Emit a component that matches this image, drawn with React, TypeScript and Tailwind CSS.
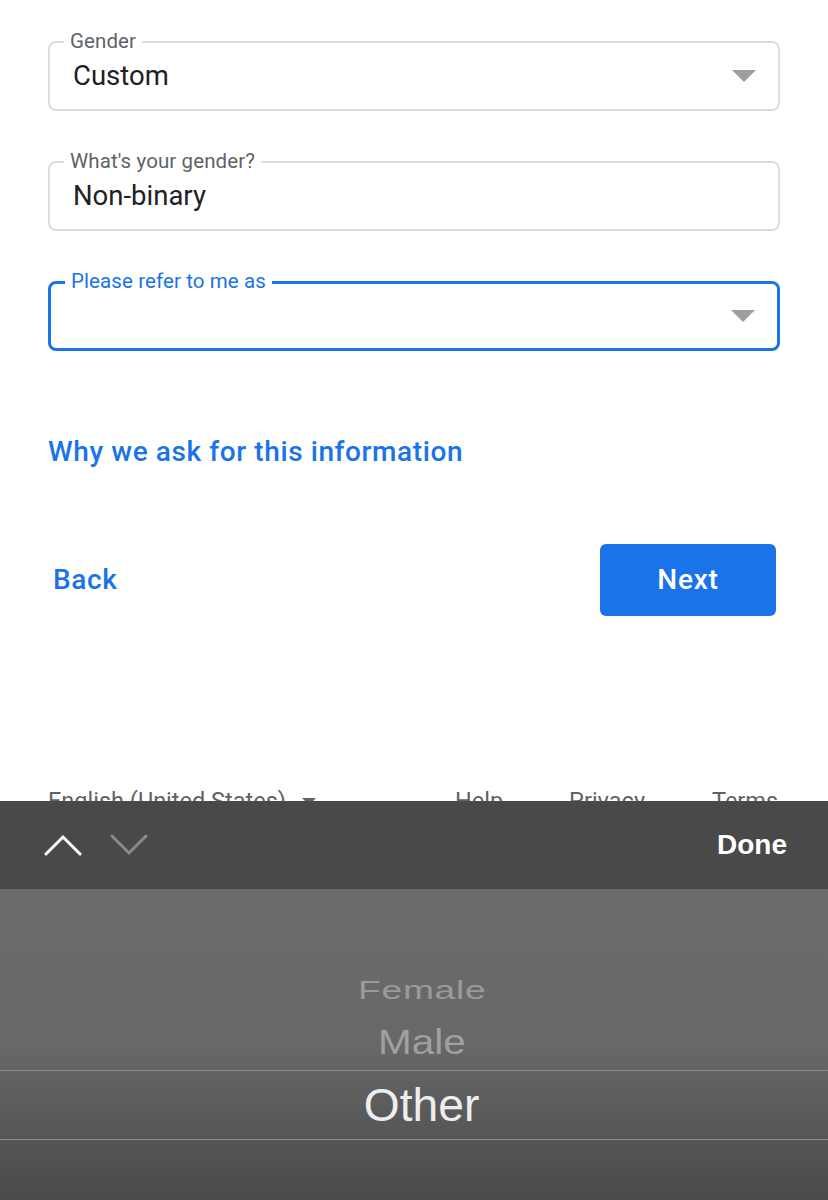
import React from "react";

function Triangle() {
  return (
    <svg width="24" height="12" viewBox="0 0 24 12" className="shrink-0">
      <path d="M0 0 L24 0 L12 12 Z" fill="#9e9e9e" />
    </svg>
  );
}

function Field({
  label,
  value,
  focused,
  select,
}: {
  label: string;
  value?: string;
  focused?: boolean;
  select?: boolean;
}) {
  return (
    <div
      className={
        "relative h-[70px] rounded-[8px] flex items-center pl-[23px] pr-[22px] " +
        (focused ? "border-[3px] border-[#1a73e8]" : "border-2 border-[#dadce0]")
      }
    >
      <span
        className={
          "absolute left-[14px] px-[6px] bg-white text-[20.5px] leading-[24px] tracking-[0.1px] " +
          (focused ? "-top-[15px] text-[#1a73e8]" : "-top-[14px] text-[#5f6368]")
        }
      >
        {label}
      </span>
      <span className="flex-1 text-[27.5px] text-[#202124] leading-[32px]">{value}</span>
      {select && <Triangle />}
    </div>
  );
}

export default function App() {
  return (
    <div
      className="relative w-[828px] h-[1200px] bg-white overflow-hidden"
      style={{ fontFamily: "Roboto, 'Noto Sans', sans-serif" }}
    >
      <div className="px-[48px] pt-[41px] flex flex-col">
        <div className="flex flex-col gap-[50px]">
          <Field label="Gender" value="Custom" select />
          <Field label="What's your gender?" value="Non-binary" />
          <Field label="Please refer to me as" focused select />
        </div>
        <div className="mt-[84px] text-[28px] font-medium text-[#1a73e8] tracking-[0.6px] leading-[34px]">
          Why we ask for this information
        </div>
        <div className="mt-[75px] flex items-center justify-between pr-[4px]">
          <span className="pl-[5px] text-[28px] font-medium text-[#1a73e8] tracking-[0.6px]">Back</span>
          <div className="w-[176px] h-[72px] rounded-[6px] bg-[#1a73e8] flex items-center justify-center text-[28px] font-medium text-white tracking-[0.8px]">
            Next
          </div>
        </div>
        <div className="mt-[170px] flex items-center text-[23.5px] text-[#5f6368] leading-[30px]">
          <span className="flex items-center gap-[16px]">
            English (United States)
            <svg width="14" height="7" viewBox="0 0 14 7">
              <path d="M0 0 L14 0 L7 7 Z" fill="#5f6368" />
            </svg>
          </span>
          <span className="ml-[139px]">Help</span>
          <span className="ml-[66px]">Privacy</span>
          <span className="ml-[67px]">Terms</span>
        </div>
      </div>

      <div className="absolute left-0 right-0 bottom-0 h-[399px] flex flex-col">
        <div className="h-[88px] bg-[#494949] flex items-center pl-[44px] pr-[41px]">
          <svg width="38" height="22" viewBox="0 0 38 22">
            <path d="M2 20 L19 3 L36 20" stroke="#ffffff" strokeWidth="3" fill="none" strokeLinecap="round" />
          </svg>
          <svg width="38" height="22" viewBox="0 0 38 22" className="ml-[28px]">
            <path d="M2 2 L19 19 L36 2" stroke="#8a8a8a" strokeWidth="3" fill="none" strokeLinecap="round" />
          </svg>
          <span
            className="ml-auto text-[28px] font-semibold text-white"
            style={{ fontFamily: "'Liberation Sans', Arial, sans-serif" }}
          >
            Done
          </span>
        </div>
        <div
          className="flex-1 bg-gradient-to-b from-[#6b6b6b] via-[#686868] to-[#4a4a4a] flex flex-col items-center pl-[16px]"
          style={{ fontFamily: "'Liberation Sans', Arial, sans-serif" }}
        >
          <div className="mt-[84px] h-[34px] flex items-center text-[28px] text-[#9a9a9a] scale-x-[1.33] scale-y-[0.95] tracking-[0.5px]">
            Female
          </div>
          <div className="mt-[16px] h-[36px] flex items-center text-[34px] text-[#a0a0a0] scale-x-[1.19] scale-y-[1.05]">
            Male
          </div>
          <div className="mt-[11px] -ml-[16px] w-[828px] h-[70px] border-y border-[#8c8c8c] flex items-center justify-center pl-[16px] text-[42px] text-[#eeeeee]">
            <span className="scale-y-[1.08] scale-x-[1.1] inline-block">Other</span>
          </div>
        </div>
      </div>
    </div>
  );
}
